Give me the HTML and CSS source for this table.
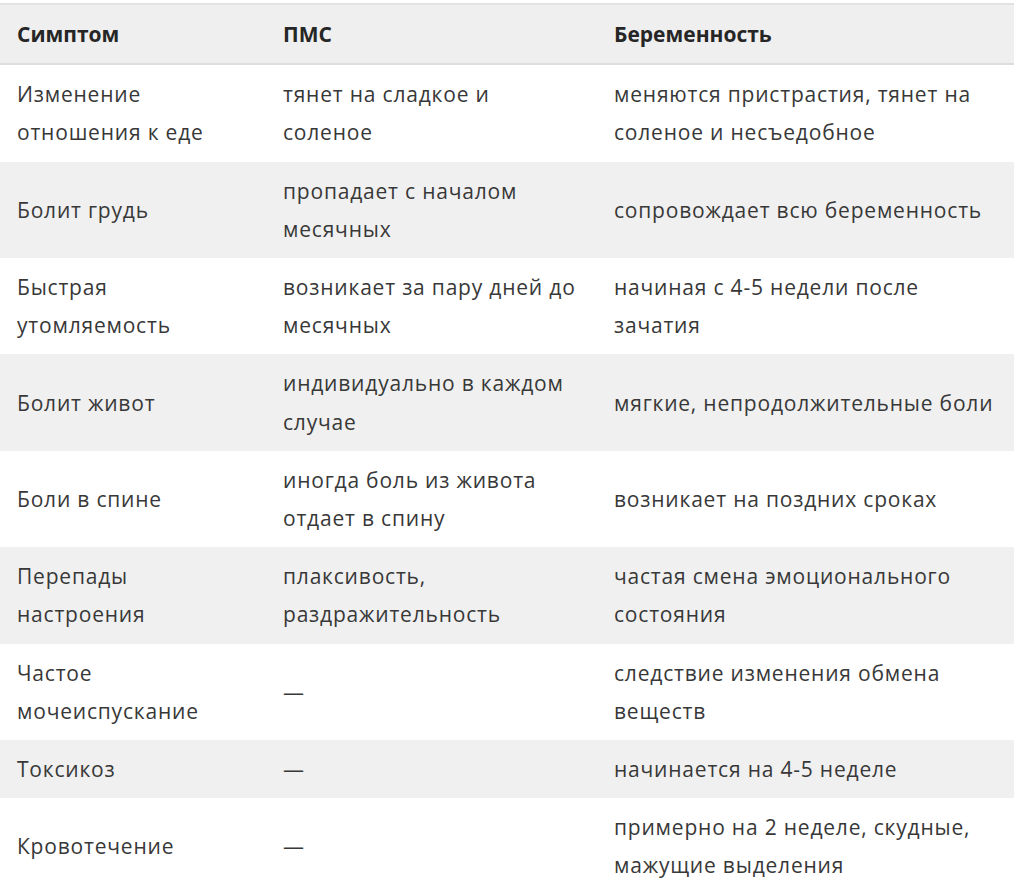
FILE: index.html
```html
<!DOCTYPE html>
<html lang="ru">
<head>
<meta charset="utf-8">
<link rel="stylesheet" href="styles.css">
</head>
<body>
<div class="wrap">
<table class="tbl">
  <colgroup><col class="c1"><col class="c2"><col class="c3"></colgroup>
  <thead>
    <tr><th>Симптом</th><th>ПМС</th><th>Беременность</th></tr>
  </thead>
  <tbody>
    <tr><td>Изменение<br>отношения к еде</td><td>тянет на сладкое и<br>соленое</td><td>меняются пристрастия, тянет на<br>соленое и несъедобное</td></tr>
    <tr class="alt"><td>Болит грудь</td><td>пропадает с началом<br>месячных</td><td>сопровождает всю беременность</td></tr>
    <tr><td>Быстрая<br>утомляемость</td><td>возникает за пару дней до<br>месячных</td><td>начиная с 4-5 недели после<br>зачатия</td></tr>
    <tr class="alt"><td>Болит живот</td><td>индивидуально в каждом<br>случае</td><td>мягкие, непродолжительные боли</td></tr>
    <tr><td>Боли в спине</td><td>иногда боль из живота<br>отдает в спину</td><td>возникает на поздних сроках</td></tr>
    <tr class="alt"><td>Перепады<br>настроения</td><td>плаксивость,<br>раздражительность</td><td>частая смена эмоционального<br>состояния</td></tr>
    <tr><td>Частое<br>мочеиспускание</td><td>—</td><td>следствие изменения обмена<br>веществ</td></tr>
    <tr class="alt"><td>Токсикоз</td><td>—</td><td>начинается на 4-5 неделе</td></tr>
    <tr><td>Кровотечение</td><td>—</td><td>примерно на 2 неделе, скудные,<br>мажущие выделения</td></tr>
  </tbody>
</table>
</div>
</body>
</html>
```

FILE: styles.css
```css
html, body {
  margin: 0;
  padding: 0;
  background: #ffffff;
}
.wrap {
  padding-top: 3px;
}
.tbl {
  width: 1014px;
  border-collapse: collapse;
  table-layout: fixed;
  font-family: "Open Sans", "Noto Sans", sans-serif;
  font-size: 21px;
  line-height: 38.2px;
  letter-spacing: 0.8px;
  color: #383838;
}
.c1 { width: 266px; }
.c2 { width: 331px; }
.c3 { width: 417px; }
.tbl th, .tbl td {
  padding: 10px 4px 10px 17px;
  text-align: left;
  vertical-align: middle;
  white-space: nowrap;
}
.tbl th {
  font-weight: 700;
  letter-spacing: 0;
  color: #262626;
  background: #efefef;
}
.tbl thead tr {
  border-top: 2px solid #e2e2e2;
  border-bottom: 2px solid #dedede;
}
.tbl .alt td {
  background: #f0f0f0;
}
```
